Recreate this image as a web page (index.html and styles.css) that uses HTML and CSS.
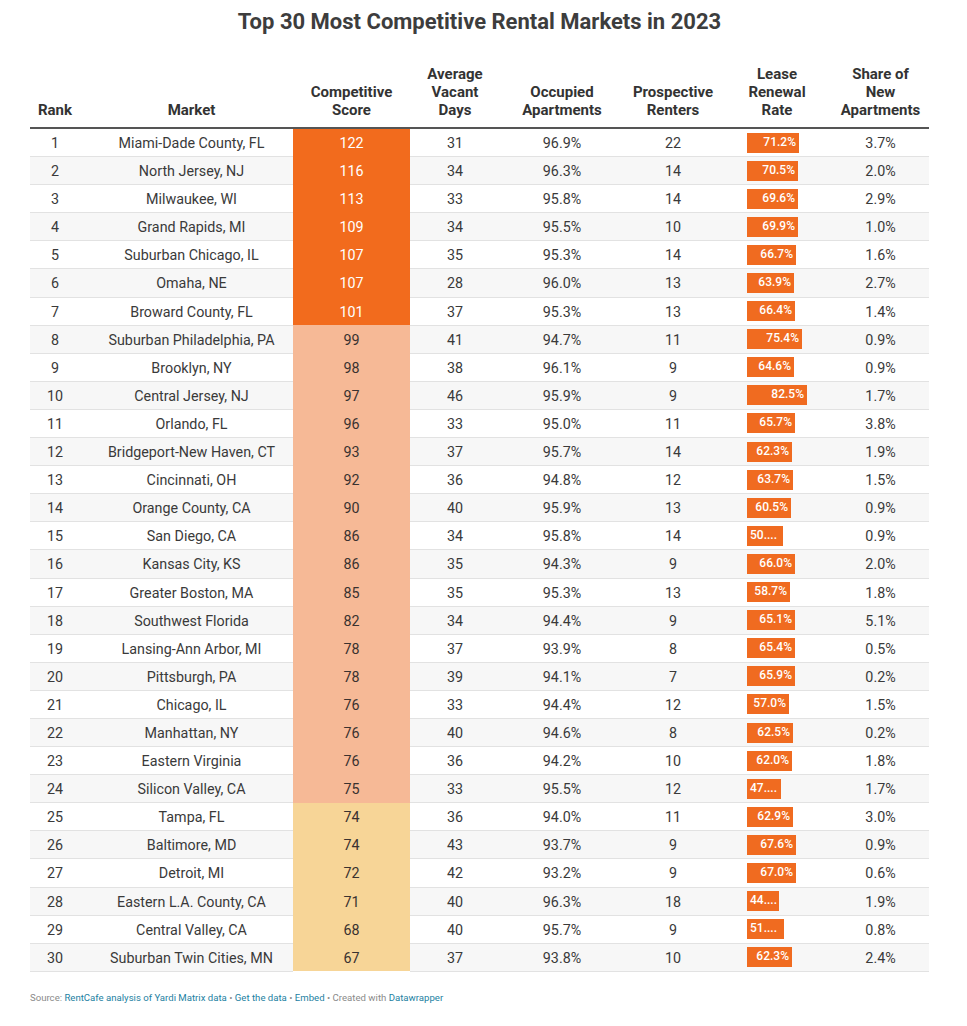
FILE: index.html
```html
<!DOCTYPE html>
<html lang="en">
<head>
<meta charset="utf-8">
<title>Top 30 Most Competitive Rental Markets in 2023</title>
<link rel="stylesheet" href="styles.css">
</head>
<body>
<div class="chart">
  <h1 class="title">Top 30 Most Competitive Rental Markets in 2023</h1>
  <table class="tbl">
    <colgroup>
      <col class="c-rank"><col class="c-market"><col class="c-score"><col class="c-days"><col class="c-occ"><col class="c-pros"><col class="c-lease"><col class="c-share">
    </colgroup>
    <thead>
      <tr>
        <th>Rank</th>
        <th class="market">Market</th>
        <th>Competitive<br>Score</th>
        <th>Average<br>Vacant<br>Days</th>
        <th>Occupied<br>Apartments</th>
        <th>Prospective<br>Renters</th>
        <th>Lease<br>Renewal<br>Rate</th>
        <th>Share of<br>New<br>Apartments</th>
      </tr>
    </thead>
    <tbody>
      <tr><td>1</td><td class="market">Miami-Dade County, FL</td><td class="score s-hi">122</td><td>31</td><td>96.9%</td><td>22</td><td class="lease"><span class="bar" style="width:52px">71.2%</span></td><td>3.7%</td></tr>
      <tr><td>2</td><td class="market">North Jersey, NJ</td><td class="score s-hi">116</td><td>34</td><td>96.3%</td><td>14</td><td class="lease"><span class="bar" style="width:51px">70.5%</span></td><td>2.0%</td></tr>
      <tr><td>3</td><td class="market">Milwaukee, WI</td><td class="score s-hi">113</td><td>33</td><td>95.8%</td><td>14</td><td class="lease"><span class="bar" style="width:51px">69.6%</span></td><td>2.9%</td></tr>
      <tr><td>4</td><td class="market">Grand Rapids, MI</td><td class="score s-hi">109</td><td>34</td><td>95.5%</td><td>10</td><td class="lease"><span class="bar" style="width:51px">69.9%</span></td><td>1.0%</td></tr>
      <tr><td>5</td><td class="market">Suburban Chicago, IL</td><td class="score s-hi">107</td><td>35</td><td>95.3%</td><td>14</td><td class="lease"><span class="bar" style="width:49px">66.7%</span></td><td>1.6%</td></tr>
      <tr><td>6</td><td class="market">Omaha, NE</td><td class="score s-hi">107</td><td>28</td><td>96.0%</td><td>13</td><td class="lease"><span class="bar" style="width:47px">63.9%</span></td><td>2.7%</td></tr>
      <tr><td>7</td><td class="market">Broward County, FL</td><td class="score s-hi">101</td><td>37</td><td>95.3%</td><td>13</td><td class="lease"><span class="bar" style="width:48px">66.4%</span></td><td>1.4%</td></tr>
      <tr><td>8</td><td class="market">Suburban Philadelphia, PA</td><td class="score s-mid">99</td><td>41</td><td>94.7%</td><td>11</td><td class="lease"><span class="bar" style="width:55px">75.4%</span></td><td>0.9%</td></tr>
      <tr><td>9</td><td class="market">Brooklyn, NY</td><td class="score s-mid">98</td><td>38</td><td>96.1%</td><td>9</td><td class="lease"><span class="bar" style="width:47px">64.6%</span></td><td>0.9%</td></tr>
      <tr><td>10</td><td class="market">Central Jersey, NJ</td><td class="score s-mid">97</td><td>46</td><td>95.9%</td><td>9</td><td class="lease"><span class="bar" style="width:60px">82.5%</span></td><td>1.7%</td></tr>
      <tr><td>11</td><td class="market">Orlando, FL</td><td class="score s-mid">96</td><td>33</td><td>95.0%</td><td>11</td><td class="lease"><span class="bar" style="width:48px">65.7%</span></td><td>3.8%</td></tr>
      <tr><td>12</td><td class="market">Bridgeport-New Haven, CT</td><td class="score s-mid">93</td><td>37</td><td>95.7%</td><td>14</td><td class="lease"><span class="bar" style="width:45px">62.3%</span></td><td>1.9%</td></tr>
      <tr><td>13</td><td class="market">Cincinnati, OH</td><td class="score s-mid">92</td><td>36</td><td>94.8%</td><td>12</td><td class="lease"><span class="bar" style="width:46px">63.7%</span></td><td>1.5%</td></tr>
      <tr><td>14</td><td class="market">Orange County, CA</td><td class="score s-mid">90</td><td>40</td><td>95.9%</td><td>13</td><td class="lease"><span class="bar" style="width:44px">60.5%</span></td><td>0.9%</td></tr>
      <tr><td>15</td><td class="market">San Diego, CA</td><td class="score s-mid">86</td><td>34</td><td>95.8%</td><td>14</td><td class="lease"><span class="bar short" style="width:36px">50....</span></td><td>0.9%</td></tr>
      <tr><td>16</td><td class="market">Kansas City, KS</td><td class="score s-mid">86</td><td>35</td><td>94.3%</td><td>9</td><td class="lease"><span class="bar" style="width:48px">66.0%</span></td><td>2.0%</td></tr>
      <tr><td>17</td><td class="market">Greater Boston, MA</td><td class="score s-mid">85</td><td>35</td><td>95.3%</td><td>13</td><td class="lease"><span class="bar" style="width:43px">58.7%</span></td><td>1.8%</td></tr>
      <tr><td>18</td><td class="market">Southwest Florida</td><td class="score s-mid">82</td><td>34</td><td>94.4%</td><td>9</td><td class="lease"><span class="bar" style="width:48px">65.1%</span></td><td>5.1%</td></tr>
      <tr><td>19</td><td class="market">Lansing-Ann Arbor, MI</td><td class="score s-mid">78</td><td>37</td><td>93.9%</td><td>8</td><td class="lease"><span class="bar" style="width:48px">65.4%</span></td><td>0.5%</td></tr>
      <tr><td>20</td><td class="market">Pittsburgh, PA</td><td class="score s-mid">78</td><td>39</td><td>94.1%</td><td>7</td><td class="lease"><span class="bar" style="width:48px">65.9%</span></td><td>0.2%</td></tr>
      <tr><td>21</td><td class="market">Chicago, IL</td><td class="score s-mid">76</td><td>33</td><td>94.4%</td><td>12</td><td class="lease"><span class="bar" style="width:42px">57.0%</span></td><td>1.5%</td></tr>
      <tr><td>22</td><td class="market">Manhattan, NY</td><td class="score s-mid">76</td><td>40</td><td>94.6%</td><td>8</td><td class="lease"><span class="bar" style="width:46px">62.5%</span></td><td>0.2%</td></tr>
      <tr><td>23</td><td class="market">Eastern Virginia</td><td class="score s-mid">76</td><td>36</td><td>94.2%</td><td>10</td><td class="lease"><span class="bar" style="width:45px">62.0%</span></td><td>1.8%</td></tr>
      <tr><td>24</td><td class="market">Silicon Valley, CA</td><td class="score s-mid">75</td><td>33</td><td>95.5%</td><td>12</td><td class="lease"><span class="bar short" style="width:34px">47....</span></td><td>1.7%</td></tr>
      <tr><td>25</td><td class="market">Tampa, FL</td><td class="score s-lo">74</td><td>36</td><td>94.0%</td><td>11</td><td class="lease"><span class="bar" style="width:46px">62.9%</span></td><td>3.0%</td></tr>
      <tr><td>26</td><td class="market">Baltimore, MD</td><td class="score s-lo">74</td><td>43</td><td>93.7%</td><td>9</td><td class="lease"><span class="bar" style="width:49px">67.6%</span></td><td>0.9%</td></tr>
      <tr><td>27</td><td class="market">Detroit, MI</td><td class="score s-lo">72</td><td>42</td><td>93.2%</td><td>9</td><td class="lease"><span class="bar" style="width:49px">67.0%</span></td><td>0.6%</td></tr>
      <tr><td>28</td><td class="market">Eastern L.A. County, CA</td><td class="score s-lo">71</td><td>40</td><td>96.3%</td><td>18</td><td class="lease"><span class="bar short" style="width:32px">44....</span></td><td>1.9%</td></tr>
      <tr><td>29</td><td class="market">Central Valley, CA</td><td class="score s-lo">68</td><td>40</td><td>95.7%</td><td>9</td><td class="lease"><span class="bar short" style="width:37px">51....</span></td><td>0.8%</td></tr>
      <tr><td>30</td><td class="market">Suburban Twin Cities, MN</td><td class="score s-lo">67</td><td>37</td><td>93.8%</td><td>10</td><td class="lease"><span class="bar" style="width:45px">62.3%</span></td><td>2.4%</td></tr>
    </tbody>
  </table>
  <p class="footer">Source: <a class="lnk">RentCafe analysis of Yardi Matrix data</a> • <a class="lnk">Get the data</a> • <a class="lnk">Embed</a> • Created with <a class="lnk">Datawrapper</a></p>
</div>
</body>
</html>
```

FILE: styles.css
```css
html, body {
  margin: 0;
  padding: 0;
  background: #fff;
}
body {
  font-family: Roboto, "Liberation Sans", Arial, sans-serif;
  color: #333;
}
.chart {
  width: 899px;
  margin-left: 30px;
  padding-top: 8px;
}
.title {
  margin: 0 0 29px 0;
  text-align: center;
  font-size: 22px;
  line-height: 28px;
  font-weight: 700;
  color: #3d3d3d;
}
.tbl {
  width: 899px;
  border-collapse: collapse;
  table-layout: fixed;
  font-size: 14.3px;
}
.c-rank { width: 50px; }
.c-market { width: 213px; }
.c-score { width: 117px; }
.c-days { width: 90px; }
.c-occ { width: 124px; }
.c-pros { width: 98px; }
.c-lease { width: 110px; }
.c-share { width: 97px; }
.tbl th {
  font-size: 15px;
  line-height: 18px;
  font-weight: 700;
  color: #333;
  vertical-align: bottom;
  text-align: center;
  padding: 0 0 8px 0;
  border-bottom: 2px solid #555;
}
.tbl td {
  text-align: center;
  line-height: 16px;
  padding: 6px 0 5.1px 0;
  border-bottom: 1px solid #e2e2e2;
  color: #3a3a3a;
  white-space: nowrap;
}
.tbl tbody tr:nth-child(even) td {
  background: #f7f7f7;
}
.tbl .market {
  padding-left: 10px;
}
.tbl td.score {
  border-bottom-color: transparent;
}
.tbl tbody tr td.s-hi {
  background: #f26b1d;
  color: #fff;
}
.tbl tbody tr td.s-mid {
  background: #f6b996;
  color: #3a3230;
}
.tbl tbody tr td.s-lo {
  background: #f7d597;
  color: #3a3230;
}
.tbl td.lease {
  text-align: left;
  padding: 3px 0 3px 25px;
}
.bar {
  display: block;
  height: 20px;
  line-height: 18px;
  background: #f06b20;
  color: #fff;
  font-size: 12px;
  font-weight: 500;
  text-align: right;
  padding-right: 3px;
  box-sizing: border-box;
  overflow: hidden;
}
.bar.short {
  text-align: left;
  padding: 0 0 0 3px;
}
.footer {
  margin: 19px 0 0 0;
  font-size: 9.6px;
  line-height: 14px;
  color: #8a8a8a;
}
.lnk {
  color: #1d81a2;
  text-decoration: none;
}
```
